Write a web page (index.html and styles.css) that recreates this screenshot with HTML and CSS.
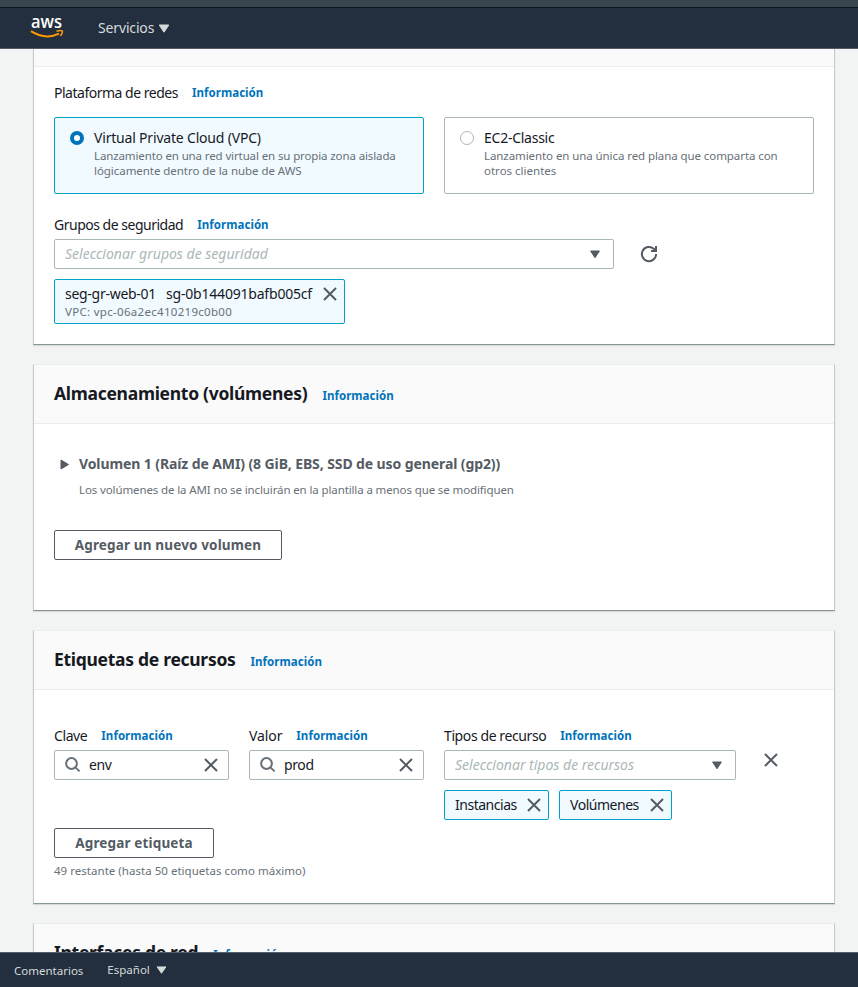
FILE: index.html
```html
<!DOCTYPE html>
<html lang="es">
<head>
<meta charset="utf-8">
<title>Plantilla de lanzamiento</title>
<link rel="stylesheet" href="styles.css">
</head>
<body>
<svg class="sprite" width="0" height="0">
  <symbol id="close" viewBox="0 0 14 14"><path d="M1 1L13 13M13 1L1 13" fill="none" stroke="#545b64" stroke-width="2"/></symbol>
  <symbol id="search" viewBox="0 0 16 16"><circle cx="6.5" cy="6.5" r="5.4" fill="none" stroke="#687078" stroke-width="2"/><path d="M10.4 10.4L14.6 14.4" stroke="#687078" stroke-width="2"/></symbol>
  <symbol id="down" viewBox="0 0 12 9"><path d="M1.6 1H10.4L6 7.8Z" fill="#545b64" stroke="#545b64" stroke-linejoin="round"/></symbol>
  <symbol id="down-light" viewBox="0 0 12 9"><path d="M1.2 1H10.8L6 8.2Z" fill="#d5dbdb" stroke="#d5dbdb" stroke-linejoin="round"/></symbol>
</svg>
<div class="strip"></div>
<header class="topbar">
  <svg class="logo" width="34" height="32" viewBox="0 -4 34 32">
    <text x="1" y="11.6" textLength="31" lengthAdjust="spacingAndGlyphs">aws</text>
    <path d="M1 15.2Q15 24.4 29 17.6" fill="none" stroke="#ff9900" stroke-width="2"/>
    <path d="M26.5 15.2Q31 13.8 32.4 15Q32.9 16.9 30.4 20" fill="none" stroke="#ff9900" stroke-width="1.5"/>
  </svg>
  <span class="services">Servicios</span>
  <svg width="12" height="9"><use href="#down-light"/></svg>
</header>
<main>
  <section class="card network">
    <div class="card-head stub"></div>
    <div class="body">
      <div class="label"><span class="t-plat">Plataforma de redes</span><a>Información</a></div>
      <div class="tiles">
        <div class="tile on"><i class="radio"></i><div><div class="name t-vpc">Virtual Private Cloud (VPC)</div><p><span class="t-l1">Lanzamiento en una red virtual en su propia zona aislada</span><br><span class="t-l2">lógicamente dentro de la nube de AWS</span></p></div></div>
        <div class="tile"><i class="radio"></i><div><div class="name t-ec2">EC2-Classic</div><p><span class="t-l3">Lanzamiento en una única red plana que comparta con</span><br><span>otros clientes</span></p></div></div>
      </div>
      <div class="label sg-label"><span class="t-grp">Grupos de seguridad</span><a>Información</a></div>
      <div class="sg-row">
        <div class="select"><em>Seleccionar grupos de seguridad</em><svg width="12" height="9"><use href="#down"/></svg></div>
        <svg class="refresh" width="18" height="18" viewBox="0 0 18 18"><path d="M16.1 9A7.1 7.1 0 1 1 13.8 3.8L15 5" fill="none" stroke="#545b64" stroke-width="2"/><path d="M17 1V7H11V5H15V1Z" fill="#545b64"/></svg>
      </div>
      <div class="token big"><div><div class="sg-name"><span class="t-seg">seg-gr-web-01</span><span class="t-sg">sg-0b144091bafb005cf</span></div><div class="sg-vpc">VPC: vpc-06a2ec410219c0b00</div></div><svg width="14" height="14"><use href="#close"/></svg></div>
    </div>
  </section>

  <section class="card storage">
    <div class="card-head"><h2>Almacenamiento (volúmenes)</h2><a>Información</a></div>
    <div class="body">
      <div class="volume"><svg width="10" height="11" viewBox="0 0 10 11"><path d="M1 1V10L8.5 5.5Z" fill="#545b64" stroke="#545b64" stroke-linejoin="round"/></svg><b>Volumen 1 (Raíz de AMI) (8 GiB, EBS, SSD de uso general (gp2))</b></div>
      <div class="hint">Los volúmenes de la AMI no se incluirán en la plantilla a menos que se modifiquen</div>
      <button class="add-volume">Agregar un nuevo volumen</button>
    </div>
  </section>

  <section class="card tags">
    <div class="card-head"><h2>Etiquetas de recursos</h2><a>Información</a></div>
    <div class="body">
      <div class="fields">
        <div class="field">
          <div class="label"><span class="t-clave">Clave</span><a>Información</a></div>
          <div class="input"><svg width="16" height="16"><use href="#search"/></svg><span>env</span><svg class="clear" width="14" height="14"><use href="#close"/></svg></div>
        </div>
        <div class="field">
          <div class="label"><span class="t-valor">Valor</span><a>Información</a></div>
          <div class="input"><svg width="16" height="16"><use href="#search"/></svg><span>prod</span><svg class="clear" width="14" height="14"><use href="#close"/></svg></div>
        </div>
        <div class="field types">
          <div class="label"><span class="t-tipos">Tipos de recurso</span><a>Información</a></div>
          <div class="select"><em>Seleccionar tipos de recursos</em><svg width="12" height="9"><use href="#down"/></svg></div>
          <div class="tokens">
            <div class="token"><span>Instancias</span><svg width="14" height="14"><use href="#close"/></svg></div>
            <div class="token wide"><span>Volúmenes</span><svg width="14" height="14"><use href="#close"/></svg></div>
          </div>
        </div>
        <svg class="remove" width="14" height="14"><use href="#close"/></svg>
      </div>
      <button class="add-tag">Agregar etiqueta</button>
      <div class="remaining">49 restante (hasta 50 etiquetas como máximo)</div>
    </div>
  </section>

  <section class="card interfaces">
    <div class="card-head"><h2>Interfaces de red</h2><a>Información</a></div>
  </section>
</main>
<footer><span class="comments">Comentarios</span><span class="lang">Español</span><svg width="11" height="8" viewBox="0 0 12 9" preserveAspectRatio="none"><use href="#down-light"/></svg></footer>
</body>
</html>
```
FILE: styles.css
```css
* { box-sizing: border-box; }
body { margin: 0; height: 987px; display: flex; flex-direction: column; overflow: hidden; background: #f2f3f3; color: #16191f; font: 14px/20px "Noto Sans", "Open Sans", sans-serif; }
.sprite { display: none; }
svg { display: block; flex: none; }
span, em, a, b, h2, .name { white-space: nowrap; }
.strip { height: 8px; flex: none; background: #38454f; border-bottom: 1px solid #11161c; }
.topbar { height: 41px; flex: none; background: #232f3e; border-bottom: 1px solid #545b64; display: flex; align-items: center; padding-left: 30px; color: #d5dbdb; }
.logo text { font: 600 18.5px "Open Sans", sans-serif; fill: #fff; }
.services { margin: 0 4px 0 34px; letter-spacing: -0.15px; }
main { flex: 1; min-height: 0; overflow: hidden; padding: 0 23px 0 33px; }
.card { width: 802px; background: #fff; border: 1px solid #c2caca; border-top-color: #eaeded; border-bottom-color: #879596; box-shadow: 0 1px 1px #d5dbdb; margin-bottom: 19px; }
.card-head { height: 59px; background: #fafafa; border-bottom: 1px solid #eaeded; padding: 0 20px; display: flex; align-items: center; }
.card-head.stub { height: 18px; }
h2 { margin: -2px 0 0; font-size: 17.5px; line-height: 22px; font-weight: 700; letter-spacing: -0.29px; }
.card-head a { margin: 4px 0 0 15px; }
a { color: #0073bb; font-size: 11.5px; font-weight: 700; letter-spacing: 0.05px; }
.body { padding: 0 20px; }
.label { display: flex; align-items: center; height: 20px; }
.label > span { margin-top: 1px; }
.label a { margin: 2px 0 0 14px; }
.t-plat { letter-spacing: -0.49px; }
.t-vpc { letter-spacing: -0.19px; }
.t-ec2 { letter-spacing: -0.25px; }
.t-l1 { letter-spacing: -0.12px; }
.t-l2 { letter-spacing: -0.05px; }
.t-l3 { letter-spacing: -0.08px; }
.t-grp { letter-spacing: -0.49px; }
.t-seg { letter-spacing: -0.28px; }
.t-sg { letter-spacing: -0.2px; }
.t-clave { letter-spacing: -0.4px; }
.t-valor { letter-spacing: -0.1px; }
.t-tipos { letter-spacing: -0.4px; }
.network { border-top: 0; height: 296px; }
.network .body { padding-top: 15px; }
.tiles { display: flex; gap: 20px; margin-top: 15px; }
.tile { width: 370px; height: 77px; border: 1px solid #aab7b8; border-radius: 2px; padding: 10px 15px; display: flex; gap: 10px; }
.tile.on { background: #f1faff; border-color: #00a1c9; }
.radio { flex: none; width: 14px; height: 14px; margin-top: 3px; border-radius: 50%; border: 1px solid #aab7b8; background: #fff; }
.on .radio { border: 4px solid #0073bb; }
.tile p { margin: 0; color: #687078; font-size: 11.5px; line-height: 15px; }
.sg-label { margin-top: 20px; }
.sg-row { display: flex; align-items: center; margin-top: 5px; }
.select { width: 560px; height: 30px; border: 1px solid #aab7b8; border-radius: 2px; display: flex; align-items: center; justify-content: space-between; padding: 0 12px 0 10px; color: #aab7b8; }
.refresh { margin-left: 26px; }
.token { height: 30px; width: 105px; border: 1px solid #00a1c9; border-radius: 2px; background: #f1faff; display: flex; align-items: center; justify-content: space-between; padding: 0 7px 0 10px; }
.tokens .token span { letter-spacing: -0.48px; }
.token.wide { width: 113px; }
.token.big { width: 291px; height: 45px; margin-top: 10px; align-items: flex-start; padding-top: 4px; }
.big svg { margin-top: 3px; }
.sg-name { display: flex; gap: 10px; }
.sg-vpc { color: #687078; font-size: 11.5px; line-height: 16px; letter-spacing: 0.3px; }
.storage { height: 247px; }
.storage .body { padding-top: 30px; }
.volume { display: flex; align-items: center; height: 20px; padding-left: 6px; gap: 9px; color: #545b64; letter-spacing: -0.1px; }
.hint { margin: 6px 0 0 25px; color: #687078; font-size: 11.5px; line-height: 20px; letter-spacing: -0.12px; }
button { display: block; height: 30px; padding: 0; border: 1px solid #545b64; border-radius: 2px; background: #fff; color: #545b64; font: 700 13.5px/20px "Noto Sans", sans-serif; letter-spacing: 0.15px; }
.add-volume { width: 228px; margin-top: 30px; }
.tags { height: 274px; }
.tags .body { padding-top: 35px; }
.fields { display: flex; height: 103px; gap: 20px; align-items: flex-start; }
.field { width: 175px; }
.field.types { width: 292px; }
.field .select { width: 292px; margin-top: 5px; }
.input { height: 30px; margin-top: 5px; border: 1px solid #aab7b8; border-radius: 2px; display: flex; align-items: center; padding: 0 10px; }
.input span { margin-left: 8px; letter-spacing: -0.4px; }
.clear { margin-left: auto; }
.tokens { display: flex; gap: 10px; margin-top: 10px; }
.remove { margin: 28px 0 0 8px; }
.add-tag { width: 160px; }
.remaining { margin-top: 3px; color: #687078; font-size: 11.5px; letter-spacing: 0.03px; }
.interfaces { height: 100px; }
footer { height: 35px; flex: none; background: #232f3e; border-top: 1px solid #545b64; display: flex; align-items: center; padding-left: 14px; color: #d5dbdb; font-size: 11.5px; }
.comments { margin-top: 2px; }
.lang { margin: 0 6px 0 24px; }
```
